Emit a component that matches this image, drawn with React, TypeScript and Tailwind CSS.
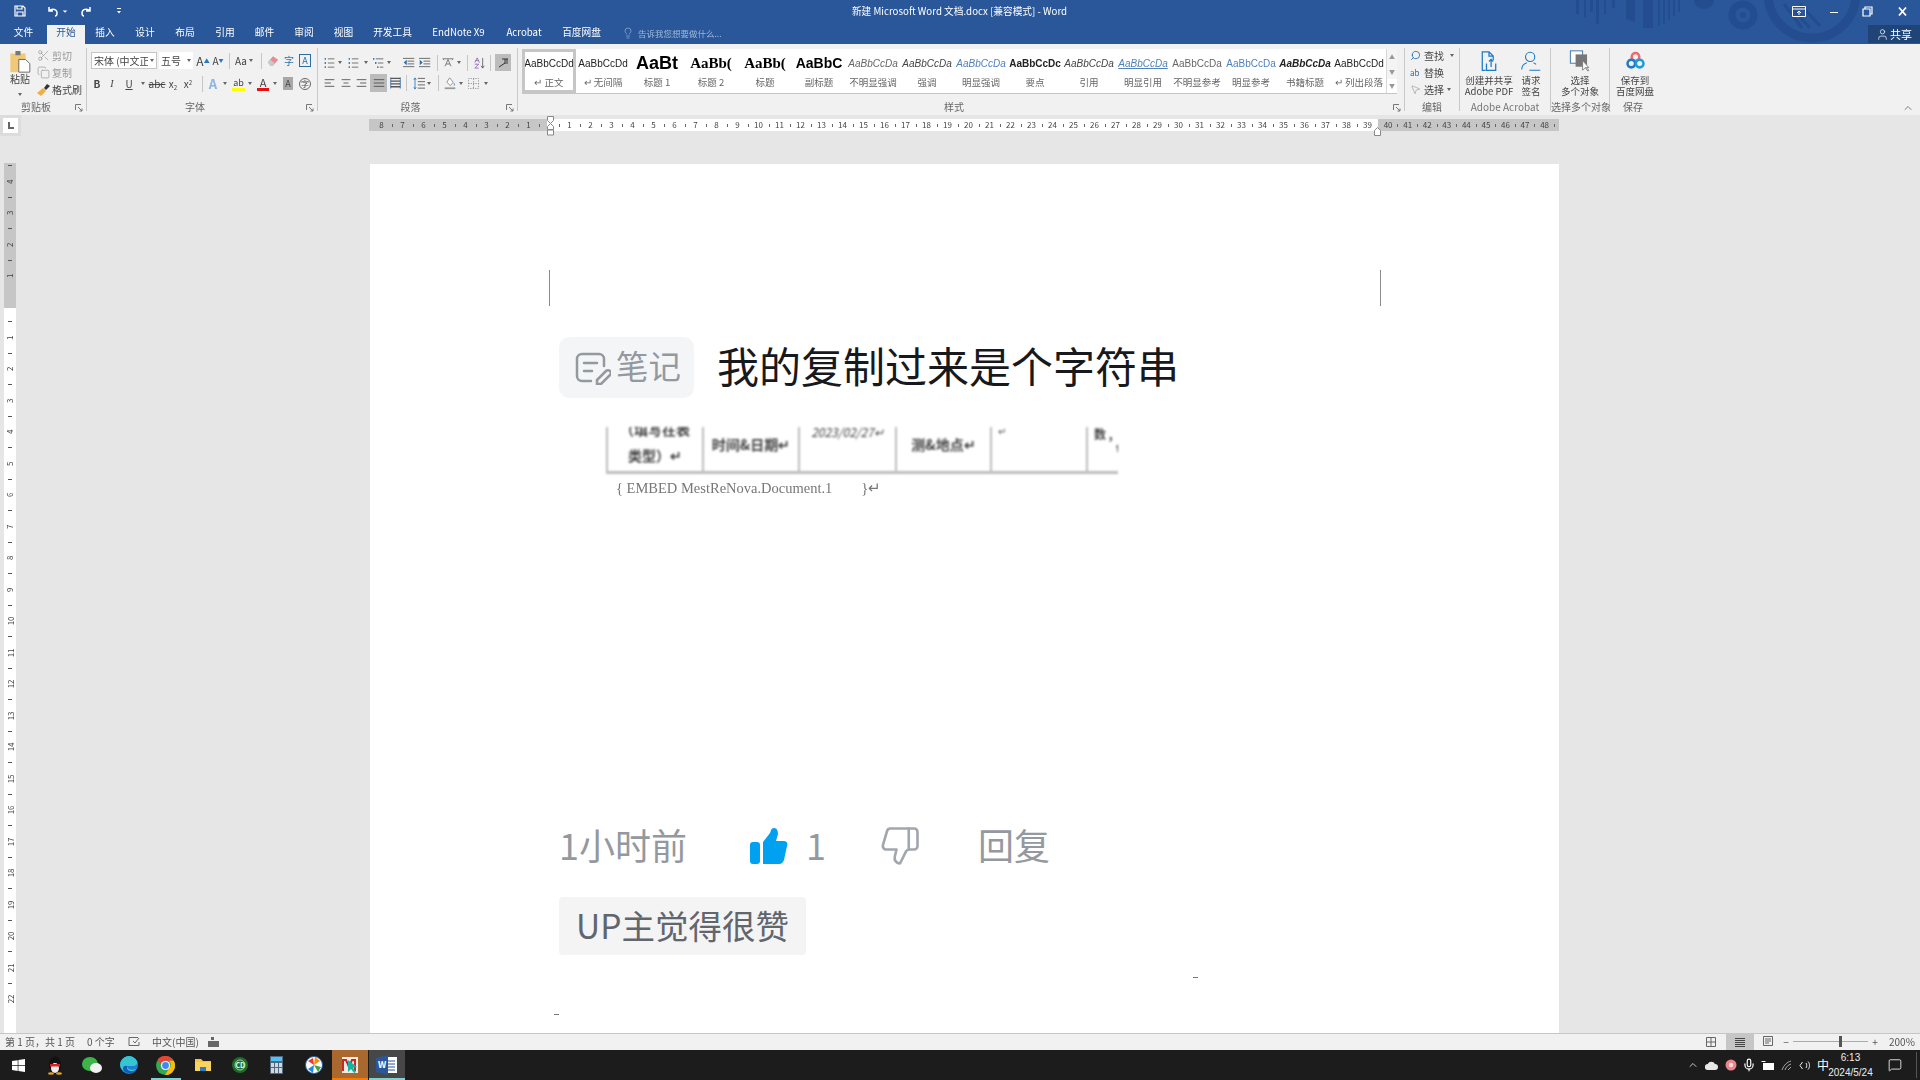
import React from "react";
import { Scissors, Copy, Search, Lightbulb, User, ThumbsDown, ChevronUp, MessageSquare, Mic, MousePointer2 } from "lucide-react";

const Caret = () => <span className="inline-block w-0 h-0 border-x-[2.5px] border-x-transparent border-t-[3px] border-t-[#666]" />;

const Launcher = () => (
  <svg width="8" height="8" viewBox="0 0 8 8" className="absolute right-[3px] bottom-[-1px]" fill="none" stroke="#777">
    <path d="M.5 6V.5H6" /><path d="M3 3l4 4M7 4.5V7H4.5" />
  </svg>
);

const Lines = ({ kind, w }: { kind: string; w: number }) => {
  const rows: Record<string, string> = {
    left: "M1 2h14M1 6h9M1 10h14",
    center: "M1 2h14M4 6h8M1 10h14",
    right: "M1 2h14M6 6h9M1 10h14",
    just: "M1 2h14M1 6h14M1 10h14",
  };
  return (
    <svg width={w} height="10" viewBox="0 0 16 12" preserveAspectRatio="none" fill="none" stroke="#555" strokeWidth="1.200">
      <path d={rows[kind]} />
    </svg>
  );
};

const Group = ({ w, label, launcher, labelCls, children }: { w: string; label: string; launcher?: boolean; labelCls?: string; children: React.ReactNode }) => (
  <div className={`relative h-[63px] shrink-0 border-r border-[#c8c8c8] ${w}`}>
    <div className="h-[51px]">{children}</div>
    <div className={`h-[16px] text-center text-[10px] leading-[16px] text-[#666] whitespace-nowrap ${labelCls ?? ""}`}>{label}</div>
    {launcher ? <Launcher /> : null}
  </div>
);

const styleItems: [string, string, string][] = [
  ["AaBbCcDd", "↵ 正文", "text-[10px] text-[#222]"],
  ["AaBbCcDd", "↵ 无间隔", "text-[10px] text-[#222]"],
  ["AaBt", "标题 1", "text-[18px] font-bold text-black"],
  ["AaBb(", "标题 2", "text-[15px] text-black [font-family:'Liberation_Serif',serif] font-bold"],
  ["AaBb(", "标题", "text-[15px] text-black [font-family:'Liberation_Serif',serif] font-bold"],
  ["AaBbC", "副标题", "text-[14px] font-bold text-black"],
  ["AaBbCcDa", "不明显强调", "text-[10px] italic text-[#666]"],
  ["AaBbCcDa", "强调", "text-[10px] italic text-[#444]"],
  ["AaBbCcDa", "明显强调", "text-[10px] italic text-[#4f81bd]"],
  ["AaBbCcDc", "要点", "text-[10px] font-bold text-[#222]"],
  ["AaBbCcDa", "引用", "text-[10px] italic text-[#444]"],
  ["AaBbCcDa", "明显引用", "text-[10px] italic text-[#4f81bd] underline decoration-[#4f81bd]"],
  ["AaBbCcDa", "不明显参考", "text-[10px] text-[#666]"],
  ["AaBbCcDa", "明显参考", "text-[10px] font-medium text-[#4f81bd]"],
  ["AaBbCcDa", "书籍标题", "text-[10px] italic font-bold text-[#222]"],
  ["AaBbCcDd", "↵ 列出段落", "text-[10px] text-[#222]"],
];

const tabs: [string, string][] = [
  ["文件", "w-[47px]"],
  ["开始", "w-[38px]"],
  ["插入", "w-[40px]"],
  ["设计", "w-[40px]"],
  ["布局", "w-[40px]"],
  ["引用", "w-[40px]"],
  ["邮件", "w-[39px]"],
  ["审阅", "w-[40px]"],
  ["视图", "w-[39px]"],
  ["开发工具", "w-[59px]"],
  ["EndNote X9", "w-[73px]"],
  ["Acrobat", "w-[58px]"],
  ["百度网盘", "w-[57px]"],
];

const Tick = () => (
  <span className="w-[10px] flex justify-center"><span className="block w-px h-[3px] bg-[#666]" /></span>
);
const Num = ({ n }: { n: number }) => <span className="w-[11px] text-center text-[8px] leading-[12px] text-[#444]">{n}</span>;

const range = (a: number, b: number) => {
  const r: number[] = [];
  if (a <= b) for (let i = a; i <= b; i++) r.push(i);
  else for (let i = a; i >= b; i--) r.push(i);
  return r;
};

const VNum = ({ n }: { n: number }) => (
  <div className="h-[31.5px] flex flex-col items-center">
    <span className="h-[15.75px] flex items-center"><span className="block h-px w-[4px] bg-[#555]" /></span>
    <span className="h-[15.75px] text-[8px] leading-[15px] text-[#444] -rotate-90">{n}</span>
  </div>
);

const TitleArt = () => (
  <svg width="300" height="44" viewBox="0 0 300 44" className="absolute left-[1560px] top-0" fill="#234d8e">
    <path d="M16 0h3v14h-3zM24 0h2v18h-2zM30 0h3v12h-3zM36 0h3v24h-3zM44 0h2v14h-2zM52 0h3v8h-3z" />
    <path d="M66 0h9v22l-9-3zM83 0h10v28H83zM98 0h2v26h-2zM103 0h2v24h-2zM108 0h2v20h-2zM113 0h2v16h-2zM118 0h2v12h-2z" />
    <path d="M134 0h20a10 9 0 0 1-20 0z" />
    <circle cx="183" cy="15" r="11" fill="none" stroke="#234d8e" strokeWidth="7" />
    <circle cx="183" cy="15" r="3" />
    <circle cx="252" cy="-6" r="44" fill="none" stroke="#234d8e" strokeWidth="9" />
    <path d="M232 8l18 20M224 4l18 24M240 4l20 22" fill="none" stroke="#234d8e" strokeWidth="3" />
  </svg>
);

const Word = () => (
  <svg width="22" height="20" viewBox="0 0 22 20">
    <rect x="7" y="2" width="14" height="16" fill="#fff" />
    <path d="M10 6h9M10 9h9M10 12h9M10 15h9" stroke="#2b579a" />
    <path d="M0 3l12-3v20L0 17z" fill="#2b579a" />
    <text x="2" y="13" fontSize="9" fontWeight="700" fill="#fff">W</text>
  </svg>
);

const Taskbar = () => (
  <div className="h-[30px] bg-[#1c1c1c] flex items-center shrink-0">
    <div className="w-[37px] flex justify-center">
      <svg width="13" height="13" viewBox="0 0 13 13" fill="#fff"><path d="M0 2l5.7-.8v5H0zM6.4 1.1L13 0v6.2H6.4zM0 6.9h5.7v5L0 11zM6.4 6.9H13V13l-6.6-1z" /></svg>
    </div>
    <div className="w-[36px] flex justify-center">
      <svg width="16" height="19" viewBox="0 0 16 19"><ellipse cx="8" cy="9" rx="6" ry="8.5" fill="#111" /><ellipse cx="8" cy="12" rx="4" ry="5" fill="#eee" /><rect x="3" y="8" width="10" height="2.5" fill="#d22" /><ellipse cx="4" cy="17.5" rx="3" ry="1.3" fill="#e8a020" /><ellipse cx="12" cy="17.5" rx="3" ry="1.3" fill="#e8a020" /></svg>
    </div>
    <div className="w-[37px] flex justify-center">
      <svg width="20" height="17" viewBox="0 0 20 17"><ellipse cx="8" cy="7" rx="8" ry="7" fill="#3eb549" /><ellipse cx="14" cy="11" rx="6" ry="5" fill="#f2f2f2" /></svg>
    </div>
    <div className="w-[37px] flex justify-center">
      <svg width="18" height="18" viewBox="0 0 18 18"><circle cx="9" cy="9" r="9" fill="#1f7fd6" /><path d="M0 9a9 9 0 0 1 17-4c1 3-1 5-4 5H7c0 3 4 5 9 3a9 9 0 0 1-16-4z" fill="#37c6d0" /><path d="M7 10c-1 4 3 7 9 4-3 4-9 4-12 1-2-2-1-6 3-5z" fill="#0d5fb5" /></svg>
    </div>
    <div className="w-[37px] h-full flex justify-center items-center relative">
      <svg width="19" height="19" viewBox="0 0 19 19">
        <circle cx="9.5" cy="9.5" r="9.5" fill="#34a853" />
        <path d="M9.5 0a9.5 9.5 0 0 1 8.2 4.7H9.5a5 5 0 0 0-4.6 3L1.6 3.6A9.5 9.5 0 0 1 9.5 0z" fill="#ea4335" />
        <path d="M17.7 4.7A9.5 9.5 0 0 1 9 19l4-6.5a5 5 0 0 0 0-7.8z" fill="#fbbc05" />
        <circle cx="9.5" cy="9.5" r="4.6" fill="#fff" /><circle cx="9.5" cy="9.5" r="3.4" fill="#4285f4" />
      </svg>
      <span className="absolute bottom-0 left-[4px] right-[3px] h-[2px] bg-[#7fd0d0]" />
    </div>
    <div className="w-[37px] flex justify-center">
      <svg width="16" height="14" viewBox="0 0 16 14"><path d="M0 1h6l2 2h8v10H0z" fill="#f6c244" /><rect x="0" y="4" width="16" height="9" fill="#fbd35f" /><rect x="5" y="9" width="6" height="4" fill="#2d7cc7" /></svg>
    </div>
    <div className="w-[37px] flex justify-center">
      <svg width="16" height="16" viewBox="0 0 16 16"><circle cx="8" cy="8" r="8" fill="#1f6b2e" /><circle cx="8" cy="8" r="5" fill="none" stroke="#a9d08e" /><text x="3.4" y="10.5" fontSize="7" fill="#dfe" fontWeight="700">CD</text></svg>
    </div>
    <div className="w-[37px] flex justify-center">
      <svg width="13" height="18" viewBox="0 0 13 18"><rect width="13" height="18" fill="#50687f" /><rect x="1" y="1" width="11" height="4" fill="#4fc3f7" /><path d="M1 7h3v4H1zM5 7h3v4H5zM9 7h3v4H9zM1 12h3v5H1zM5 12h3v5H5zM9 12h3v5H9z" fill="#cfd8dc" /></svg>
    </div>
    <div className="w-[37px] flex justify-center">
      <svg width="18" height="18" viewBox="0 0 18 18"><circle cx="9" cy="9" r="8.5" fill="#fff" stroke="#1f5f9f" /><path d="M9 9L3 5l5-3z" fill="#e53935" /><path d="M9 9l1-8 5 4z" fill="#fb8c00" /><path d="M9 9l7 2-3 5z" fill="#43a047" /><path d="M9 9l-1 8-5-4z" fill="#1e88e5" /></svg>
    </div>
    <div className="w-[36px] h-full bg-[#a9692e] flex justify-center items-center relative">
      <svg width="17" height="17" viewBox="0 0 17 17"><rect width="16" height="16" fill="#f4e8e0" /><path d="M1 14V3h3l3 7 3-7h3v11" fill="none" stroke="#c62828" strokeWidth="2" /><path d="M6 3l9 7-4 1 3 4-2 1-3-4-3 3z" fill="#12b5a5" /></svg>
      <span className="absolute bottom-0 left-0 right-0 h-[2px] bg-[#f57c00]" />
    </div>
    <div className="w-[36px] h-full ml-px bg-[#474747] flex justify-center items-center relative">
      <Word />
      <span className="absolute bottom-0 left-0 right-0 h-[2px] bg-[#7fd0d0]" />
    </div>
    <div className="flex-1" />
    <div className="flex items-center text-white h-full">
      <span className="w-[19px] flex justify-center"><ChevronUp size={12} strokeWidth={1.5} /></span>
      <span className="w-[19px] flex justify-center">
        <svg width="13" height="9" viewBox="0 0 13 9" fill="#e8e8e8"><path d="M3 9a3 3 0 0 1-.3-6A4 4 0 0 1 10 3a3 3 0 0 1 0 6z" /></svg>
      </span>
      <span className="w-[19px] flex justify-center">
        <svg width="12" height="12" viewBox="0 0 12 12"><circle cx="6" cy="6" r="5.5" fill="#e8868a" /><circle cx="6" cy="6" r="2.2" fill="#f7dbe0" /></svg>
      </span>
      <span className="w-[18px] flex justify-center"><Mic size={14} strokeWidth={2} /></span>
      <span className="w-[19px] flex justify-center">
        <svg width="13" height="11" viewBox="0 0 13 11" fill="none" stroke="#fff"><rect x="2.5" y="3.5" width="10" height="6" fill="#fff" /><path d="M.5 1.5h4" /></svg>
      </span>
      <span className="w-[19px] flex justify-center">
        <svg width="11" height="11" viewBox="0 0 11 11" fill="none" stroke="#aaa"><path d="M1 10c2-5 5-8 9-9M4 10c1-3 3-5 6-6M7 10c1-1 2-2 3-3" /></svg>
      </span>
      <span className="w-[18px] flex justify-center">
        <svg width="12" height="11" viewBox="0 0 12 11" fill="none" stroke="#eee"><path d="M3.5 2L1 5.500l2.500 3.500M7 3c1 1.500 1 3.500 0 5M9 1.500c2 2 2 6 0 8" /></svg>
      </span>
      <span className="w-[18px] text-center text-[12px]">中</span>
      <div className="w-[37px] flex flex-col items-center text-[10px] leading-[15px] text-[#eee] whitespace-nowrap [font-family:'Liberation_Sans',sans-serif]">
        <span>6:13</span>
        <span>2024/5/24</span>
      </div>
      <div className="w-[51px] h-full flex items-center justify-center relative">
        <MessageSquare size={14} strokeWidth={1.4} />
        <span className="absolute right-[3px] top-[2px] w-px h-[26px] bg-[#555]" />
      </div>
    </div>
  </div>
);

const StatusBar = () => (
  <div className="h-[17px] shrink-0 bg-[#f1f1f1] border-t border-[#c6c6c6] flex items-center text-[10px] leading-[14px] pb-px text-[#555] blur-[0.25px]">
    <span className="ml-[5px] w-[82px]">第 1 页，共 1 页</span>
    <span className="w-[41px]">0 个字</span>
    <svg width="12" height="10" viewBox="0 0 12 10" fill="none" stroke="#666"><path d="M10 .5H1v8h10V5M5 4l2 2 4-5" /></svg>
    <span className="ml-[12px] w-[56px]">中文(中国)</span>
    <svg width="11" height="10" viewBox="0 0 11 10" fill="#666"><path d="M3 0h3v3H3zM0 4h11v6H0z" /></svg>
    <div className="flex-1" />
    <svg width="10" height="10" viewBox="0 0 10 10" fill="none" stroke="#666" className="mr-[10px]"><path d="M.5.5h9v9h-9zM5 .5v9M.5 5h9" /></svg>
    <div className="w-[28px] h-[16px] bg-[#c6c6c6] flex items-center justify-center">
      <svg width="10" height="10" viewBox="0 0 10 10" stroke="#444"><path d="M0 1.500h10M0 3.500h10M0 5.500h10M0 7.500h10M0 9.500h10" /></svg>
    </div>
    <svg width="12" height="11" viewBox="0 0 12 11" fill="none" stroke="#666" className="ml-[9px] mr-[7px]"><path d="M.5.5h9v9h-9zM2 3h6M2 5h6M2 7h4" /></svg>
    <span className="w-[8px] text-center">−</span>
    <div className="relative w-[75px] h-px bg-[#aaa] mx-[3px]">
      <span className="absolute left-[46px] top-[-5px] w-[3px] h-[11px] bg-[#555]" />
    </div>
    <span className="w-[8px] text-center">+</span>
    <span className="ml-[10px] mr-[7px] w-[24px]">200%</span>
  </div>
);

const VSep = () => <span className="block w-px h-[16px] bg-[#c6c6c6] shrink-0" />;

const Ribbon = () => (
  <div className="h-[71px] shrink-0 bg-[#f1f1f1] flex pt-[4px] relative">
    <div className="flex blur-[0.35px] text-[#444]">
      <Group w="w-[87px]" label="剪贴板" labelCls="pr-[14px]" launcher>
        <div className="flex h-full">
          <div className="w-[37px] flex flex-col items-center pt-[3px] pl-[3px]">
            <svg width="21" height="22" viewBox="0 0 24 26">
              <rect x="0" y="3" width="18" height="22" fill="#f0c878" />
              <rect x="6" y="0" width="6" height="5" fill="#777" />
              <path d="M10 10h8l5 5v10H10z" fill="#fff" stroke="#555" />
            </svg>
            <span className="text-[10px] leading-[12px]">粘贴</span>
            <span className="leading-[4px] mt-[2px]"><Caret /></span>
          </div>
          <div className="flex flex-col gap-[4px] pt-[1px] text-[10px] leading-[13px]">
            <div className="flex items-center gap-[2px] text-[#999]"><Scissors size={13} strokeWidth={1.3} /><span>剪切</span></div>
            <div className="flex items-center gap-[2px] text-[#999]"><Copy size={13} strokeWidth={1.3} /><span>复制</span></div>
            <div className="flex items-center gap-[2px]">
              <svg width="13" height="12" viewBox="0 0 13 12"><path d="M0 9l6-5 3 3-5 5z" fill="#f0b040" /><path d="M7 4l3-4 3 2-4 4z" fill="#333" /></svg>
              <span className="text-[10px]">格式刷</span>
            </div>
          </div>
        </div>
      </Group>

      <Group w="w-[231px]" label="字体" labelCls="pr-[14px]" launcher>
        <div className="pl-[4px] pt-[4px] flex items-center h-[17px] box-content">
          <div className="w-[66px] h-[17px] bg-white border border-[#c6c6c6] flex items-center justify-between px-[2px] text-[10px] leading-none">
            <span className="whitespace-nowrap overflow-hidden w-[54px] h-[14px] leading-[14px]">宋体 (中文正文</span><Caret />
          </div>
          <div className="w-[34px] ml-[2px] h-[17px] bg-white flex items-center justify-between px-[2px] text-[10px] leading-none">
            <span>五号</span><Caret />
          </div>
          <span className="w-[18px] ml-px text-center text-[12px] leading-none">A<sup className="text-[#2b79c2] text-[6px]">▲</sup></span>
          <span className="w-[12px] text-center text-[10px] leading-none">A<sup className="text-[#2b79c2] text-[5px]">▼</sup></span>
          <span className="ml-[5px]"><VSep /></span>
          <span className="ml-[5px] w-[21px] flex items-center gap-[2px] text-[10px] leading-none">Aa<Caret /></span>
          <span className="ml-[5px]"><VSep /></span>
          <svg width="12" height="12" viewBox="0 0 14 13" className="ml-[5px]"><path d="M1 8l6-7 6 4-6 7H4z" fill="#e88a92" /><path d="M1 8l3-3 5 4-2 3H4z" fill="#c9c9c9" /></svg>
          <span className="w-[10px] ml-[5px] text-center text-[10px] leading-[10px] text-[#2f6fa8]">字</span>
          <span className="w-[12px] h-[13px] ml-[5px] border border-[#2b6ca3] text-[#2b6ca3] text-[9px] leading-[11px] text-center">A</span>
        </div>
        <div className="pl-[3px] mt-[6px] flex items-center h-[17px] text-[10px]">
          <span className="w-[14px] font-bold text-center">B</span>
          <span className="w-[16px] italic text-center [font-family:'Liberation_Serif',serif]">I</span>
          <span className="w-[18px] underline text-center">U</span>
          <span className="w-[10px] flex justify-center"><Caret /></span>
          <span className="w-[18px] text-center line-through">abc</span>
          <span className="w-[14px] text-center">x<sub className="text-[6px]">2</sub></span>
          <span className="w-[16px] text-center">x<sup className="text-[6px]">2</sup></span>
          <span className="ml-[6px]"><VSep /></span>
          <span className="w-[14px] ml-[3px] text-[13px] leading-none font-bold text-center text-[#8db4e2]">A</span>
          <span className="w-[10px] flex justify-center"><Caret /></span>
          <span className="w-[13px] ml-[2px] text-[9px] text-center leading-[11px] border-b-[3px] border-[#ffff00]">ab</span>
          <span className="w-[10px] flex justify-center"><Caret /></span>
          <span className="w-[12px] ml-[2px] text-[11px] leading-[11px] text-center border-b-[3px] border-[#e81010]">A</span>
          <span className="w-[12px] flex justify-center"><Caret /></span>
          <span className="w-[10px] h-[13px] ml-[2px] bg-[#a8a8a8] text-[9px] leading-[13px] text-center">A</span>
          <span className="ml-[6px] w-[12px] h-[12px] rounded-full border border-[#666] text-[8px] leading-[10px] text-center">字</span>
        </div>
      </Group>

      <Group w="w-[200px]" label="段落" labelCls="pr-[14px]" launcher>
        <div className="pl-[6px] pt-[4px] flex items-center h-[21px] box-content">
          <svg width="11" height="12" viewBox="0 0 17 13" preserveAspectRatio="none" fill="none"><path d="M6 2h10M6 6.500h10M6 11h10" stroke="#555" /><path d="M1 1h2v2H1zM1 5.500h2v2H1zM1 10h2v2H1z" fill="#2b79c2" /></svg>
          <span className="ml-[3px] flex"><Caret /></span>
          <svg width="11" height="12" viewBox="0 0 17 13" preserveAspectRatio="none" fill="none" className="ml-[6px]"><path d="M6 2h10M6 6.500h10M6 11h10" stroke="#555" /><path d="M1 1h2v2H1zM1 5.500h2v2H1zM1 10h2v2H1z" fill="#2b79c2" /></svg>
          <span className="ml-[5px] flex"><Caret /></span>
          <svg width="11" height="12" viewBox="0 0 16 13" preserveAspectRatio="none" fill="none" className="ml-[5px]"><path d="M4 2h11M7 6.500h8M10 11h5" stroke="#555" /><path d="M0 1h2v2H0zM3 5.500h2v2H3zM6 10h2v2H6z" fill="#2b79c2" /></svg>
          <span className="ml-[3px] flex"><Caret /></span>
          <svg width="12" height="11" viewBox="0 0 16 12" preserveAspectRatio="none" fill="none" className="ml-[12px]"><path d="M0 1.500h15M6 4.500h9M6 7.500h9M0 10.500h15" stroke="#555" /><path d="M5 3v6L1 6z" fill="#2b6ca3" /></svg>
          <svg width="12" height="11" viewBox="0 0 16 12" preserveAspectRatio="none" fill="none" className="ml-[4px]"><path d="M0 1.500h15M6 4.500h9M6 7.500h9M0 10.500h15" stroke="#555" /><path d="M1 3v6l4-3z" fill="#2b6ca3" /></svg>
          <span className="ml-[6px]"><VSep /></span>
          <svg width="12" height="13" viewBox="0 0 16 14" fill="none" stroke="#555" className="ml-[4px]"><path d="M1 2h14M4 12L8 3l4 9M5.500 9h5" /><path d="M1 2l2 2M15 2l-2 2" stroke="#2b79c2" /></svg>
          <span className="ml-[3px] flex"><Caret /></span>
          <span className="ml-[6px]"><VSep /></span>
          <svg width="11" height="14" viewBox="0 0 14 15" fill="none" className="ml-[6px]"><path d="M1 7L4 1l3 6M2 4.500h4" stroke="#8a5cb0" /><path d="M1 9h5L1 14h5" stroke="#8a5cb0" /><path d="M11 1v13M9 11l2 3 2-3" stroke="#555" /></svg>
          <span className="ml-[5px]"><VSep /></span>
          <span className="ml-[4px] w-[16px] h-[17px] bg-[#bcbcbc] flex items-center justify-center">
            <svg width="11" height="11" viewBox="0 0 11 11" fill="none" stroke="#333"><path d="M1 10l6-4M4 2h6M7 2v5M9 2v5" /></svg>
          </span>
        </div>
        <div className="pl-[6px] mt-[1px] flex items-center h-[18px] text-[#555]">
          <Lines kind="left" w={11} />
          <span className="ml-[6px] flex"><Lines kind="center" w={10} /></span>
          <span className="ml-[5px] flex"><Lines kind="right" w={11} /></span>
          <span className="ml-[3px] w-[17px] h-[18px] bg-[#bcbcbc] flex items-center justify-center"><Lines kind="just" w={12} /></span>
          <svg width="11" height="12" viewBox="0 0 15 13" preserveAspectRatio="none" fill="none" stroke="#555" className="ml-[3px]"><path d="M1 .5v12M14 .5v12" stroke="#2b6ca3" /><path d="M1 1.500h13M1 4.500h13M1 7.500h13M1 10.500h13" strokeWidth="1.500" /></svg>
          <span className="ml-[5px]"><VSep /></span>
          <svg width="12" height="13" viewBox="0 0 15 14" preserveAspectRatio="none" fill="none" className="ml-[6px]"><path d="M6 1.500h9M6 5h9M6 8.500h9M6 12h9" stroke="#555" /><path d="M2.500 1v12M1 3l1.500-2L4 3M1 11l1.500 2L4 11" stroke="#2b79c2" /></svg>
          <span className="ml-[2px] flex"><Caret /></span>
          <span className="ml-[7px]"><VSep /></span>
          <svg width="12" height="13" viewBox="0 0 17 15" preserveAspectRatio="none" fill="none" stroke="#777" className="ml-[5px]"><path d="M8 1l5 5-4 4-5-4z" fill="#fff" /><path d="M1 13h15" strokeWidth="2" stroke="#999" /><path d="M14 7c1 1 1 3 0 3" stroke="#2b79c2" /></svg>
          <span className="ml-[3px] flex"><Caret /></span>
          <svg width="11" height="11" viewBox="0 0 14 12" preserveAspectRatio="none" fill="none" stroke="#888" strokeDasharray="1.5 1.5" className="ml-[5px]"><path d="M.5.500h13v11H.5zM.5 6h13M7 .5v11" /></svg>
          <span className="ml-[5px] flex"><Caret /></span>
        </div>
      </Group>

      <div className="relative w-[887px] h-[63px] shrink-0 border-r border-[#c8c8c8]">
        <div className="ml-[4px] mt-px w-[875px] h-[45px] bg-white border-b border-[#c6c6c6] flex">
          {styleItems.map(([sample, label, cls], i) => (
            <div key={i} className={`w-[54px] shrink-0 h-[44px] flex flex-col items-center overflow-hidden ${i === 0 ? "border-[3px] border-[#c6c6c6] bg-white" : "pt-[3px]"}`}>
              <span className={`h-[23px] leading-[23px] whitespace-nowrap [font-family:'Liberation_Sans',sans-serif] ${cls}`}>{sample}</span>
              <span className="text-[9.500px] leading-[14px] whitespace-nowrap text-[#666]">{label}</span>
            </div>
          ))}
          <div className="w-[11px] shrink-0 h-[44px] border-l border-[#d8d8d8] flex flex-col text-[#999] text-[6px] text-center bg-[#f4f4f4]">
            <span className="h-[15px] leading-[15px]">▲</span>
            <span className="h-[15px] leading-[15px]">▼</span>
            <span className="h-[14px] leading-[14px] bg-white">▼</span>
          </div>
        </div>
        <div className="mt-[5px] pr-[14px] text-center text-[10px] leading-[16px] text-[#666]">样式</div>
        <Launcher />
      </div>

      <Group w="w-[55px]" label="编辑">
        <div className="pl-[5px] pt-[1px] flex flex-col gap-[4px] text-[10px] leading-[13px]">
          <div className="flex items-center gap-[3px]"><Search size={11} strokeWidth={1.8} className="text-[#2b6ca3] -scale-x-100" /><span>查找</span><span className="ml-[3px] flex"><Caret /></span></div>
          <div className="flex items-center gap-[3px]"><span className="text-[8px] leading-[9px] text-[#2b6ca3] w-[11px]">ab</span><span>替换</span></div>
          <div className="flex items-center gap-[3px]"><MousePointer2 size={11} strokeWidth={1} className="text-[#777]" /><span>选择</span><Caret /></div>
        </div>
      </Group>

      <Group w="w-[91px]" label="Adobe Acrobat" labelCls="text-[#777]">
        <div className="flex h-full pt-[3px] text-[9.500px] leading-[11px] text-center">
          <div className="w-[58px] flex flex-col items-center">
            <svg width="18" height="21" viewBox="0 0 20 25" fill="none" stroke="#1d79c9" strokeWidth="1.500" className="mb-[3px]"><path d="M6 23H2V1h8l5 5v5M10 1v5h5" /><path d="M7 15v8h11v-8M12.500 19v-9M10 12.500l2.500-2.500 2.500 2.500" /></svg>
            <span className="whitespace-nowrap">创建并共享</span>
            <span className="whitespace-nowrap">Adobe PDF</span>
          </div>
          <div className="w-[26px] flex flex-col items-center">
            <svg width="22" height="21" viewBox="0 0 24 25" fill="none" stroke="#1d79c9" strokeWidth="1.300" className="mb-[3px]"><circle cx="11" cy="7" r="5.500" /><path d="M1 22c0-5 3-7 6-8M15 14c1 .3 2 1 3 2M10 23h13" /></svg>
            <span>请求</span>
            <span>签名</span>
          </div>
        </div>
      </Group>

      <Group w="w-[59px]" label="选择多个对象" labelCls="text-[9px]">
        <div className="flex flex-col items-center pt-[2px] text-[9.500px] leading-[11px]">
          <svg width="22" height="22" viewBox="0 0 24 25" className="mb-[3px]"><rect x="1" y="1" width="14" height="14" fill="#fff" stroke="#2b6ca3" /><rect x="7" y="5" width="13" height="14" fill="#777" /><path d="M15 12v11l3-3 3 4 1-1-3-3h3z" fill="#fff" stroke="#777" /></svg>
          <span>选择</span>
          <span>多个对象</span>
        </div>
      </Group>

      <div className="relative w-[50px] h-[63px] shrink-0">
        <div className="h-[51px] flex flex-col items-center pt-[3px] text-[9.500px] leading-[11px]">
          <svg width="21" height="21" viewBox="0 0 22 25" fill="none" strokeWidth="3" className="mb-[3px]"><circle cx="11" cy="7" r="4.500" stroke="#ef6a6a" /><circle cx="6" cy="15" r="4.500" stroke="#1d79c9" /><circle cx="16" cy="15" r="4.500" stroke="#1d9bd9" /></svg>
          <span className="whitespace-nowrap">保存到</span>
          <span className="whitespace-nowrap">百度网盘</span>
        </div>
        <div className="h-[16px] pr-[4px] text-center text-[10px] leading-[16px] text-[#666]">保存</div>
      </div>
    </div>
    <ChevronUp size={12} strokeWidth={1.5} className="absolute right-[6px] bottom-[1px] text-[#555]" />
  </div>
);

const HRuler = () => (
  <div className="flex -ml-px w-[1190px] h-[12px] mt-[4px] overflow-hidden relative blur-[0.2px]">
    <div className="w-[178px] shrink-0 bg-[#c6c6c6] flex justify-end items-center pr-[3px]">
      {range(8, 1).map((n) => (
        <React.Fragment key={n}><Num n={n} /><Tick /></React.Fragment>
      ))}
    </div>
    <div className="w-[831px] shrink-0 bg-white flex items-center pl-[7px] overflow-hidden">
      {range(1, 39).map((n) => (
        <React.Fragment key={n}><Tick /><Num n={n} /></React.Fragment>
      ))}
    </div>
    <div className="w-[181px] shrink-0 bg-[#c6c6c6] flex items-center pl-[5px]">
      {range(40, 48).map((n) => (
        <React.Fragment key={n}><Num n={n} /><Tick /></React.Fragment>
      ))}
    </div>
  </div>
);

const Page = () => (
  <div className="relative w-[1189px] flex-1 mt-[33px] bg-white overflow-hidden">
    <div className="mt-[106px] ml-[179px] w-[832px] h-[36px] flex justify-between">
      <span className="w-px h-full bg-[#8c8c8c]" />
      <span className="w-px h-full bg-[#8c8c8c]" />
    </div>

    <div className="ml-[189px] mt-[31px]">
      <div className="flex items-center h-[61px]">
        <div className="w-[135px] h-[61px] rounded-[10px] bg-[#f4f5f7] flex items-center pl-[16px] text-[#9499a0]">
          <svg width="36" height="34" viewBox="0 0 36 34" fill="none" stroke="#9499a0" strokeWidth="2.500" strokeLinecap="round" className="shrink-0">
            <path d="M16 30H7a5 5 0 0 1-5-5V8a5 5 0 0 1 5-5h17a5 5 0 0 1 5 5v7" />
            <path d="M9 12h13M9 20h8" />
            <path d="M22 29l9-9a2.800 2.800 0 0 1 4 4l-9 9h-4z" />
          </svg>
          <span className="ml-[5px] text-[32.500px] leading-none whitespace-nowrap -translate-y-[2px]">笔记</span>
        </div>
        <span className="ml-[23px] text-[42px] leading-none text-[#18191c] whitespace-nowrap -translate-y-[3px]">我的复制过来是个字符串</span>
      </div>

      <div className="mt-[29px] ml-[47px] w-[512px] h-[47px] flex border-b-[3px] border-[#bdbdbd] overflow-hidden blur-[0.9px] text-[#444] font-bold text-[14px]">
        <div className="w-[96px] border-l-2 border-[#bdbdbd] flex flex-col items-center text-[14px] leading-[26px] -mt-[11px] whitespace-nowrap">
          <span>（填写在表</span><span>类型）↵</span>
        </div>
        <div className="w-[96px] border-l-2 border-[#bdbdbd] flex items-center justify-center pb-[10px] whitespace-nowrap">时间&日期↵</div>
        <div className="w-[97px] border-l-2 border-[#bdbdbd] flex justify-center text-[12px] font-normal italic leading-[10px] whitespace-nowrap">2023/02/27↵</div>
        <div className="w-[95px] border-l-2 border-[#bdbdbd] flex items-center justify-center pb-[10px] whitespace-nowrap">测&地点↵</div>
        <div className="w-[96px] border-l-2 border-[#bdbdbd] pl-[6px] text-[10px] leading-[8px] font-normal">↵</div>
        <div className="w-[32px] border-l-2 border-[#bdbdbd] pl-[6px] text-[12px] leading-[14px] whitespace-nowrap">数 ,<br /><span className="pl-[22px]">t</span></div>
      </div>
      <div className="ml-[57px] mt-[6px] h-[17px] text-[14.500px] leading-[17px] text-[#777] blur-[0.7px] whitespace-pre [font-family:'Liberation_Serif',serif]">
        {"{ EMBED MestReNova.Document.1        }↵"}
      </div>

      <div className="mt-[329px] flex items-center h-[40px] text-[36px] leading-none text-[#9499a0]">
        <span className="w-[191px] -translate-y-[2px]">1小时前</span>
        <svg width="38" height="36" viewBox="0 0 38 36" fill="#00a1f1" className="shrink-0">
          <rect x="0" y="14" width="10" height="22" rx="3" />
          <path d="M13 14L20 5c1-2 1-5 4-5 3 0 4 3 4 6l-2 7h8c3 0 4 3 3 5l-3 14c-1 2-2 4-5 4H13z" />
        </svg>
        <span className="w-[95px] pl-[18px] -translate-y-[2px]">1</span>
        <div className="w-[95px]"><ThumbsDown size={42} strokeWidth={1.500} className="text-[#a2a7ae] -ml-[4px]" /></div>
        <span className="-translate-y-[2px]">回复</span>
      </div>

      <div className="mt-[31px] w-[247px] h-[58px] rounded-[4px] bg-[#f4f4f4] flex items-center justify-center text-[33.500px] leading-none text-[#61666d] whitespace-nowrap">
        <span className="-translate-y-px">UP主觉得很赞</span>
      </div>
    </div>

    <span className="absolute left-[823px] top-[813px] w-[5px] h-px bg-[#777]" />
    <span className="absolute left-[184px] top-[850px] w-[5px] h-px bg-[#777]" />
  </div>
);

export default function App() {
  return (
    <div className="w-[1920px] h-[1080px] overflow-hidden flex flex-col [font-family:'Noto_Sans_CJK_SC','Noto_Sans',sans-serif]">
      <div className="relative h-[44px] shrink-0 bg-[#2a579a] text-white overflow-hidden">
        <TitleArt />
        <div className="relative h-[22px] flex items-center blur-[0.2px]">
          <svg width="12" height="12" viewBox="0 0 12 12" fill="none" stroke="#fff" strokeWidth="1.200" className="ml-[14px]"><path d="M1 1h8l2 2v8H1zM3 1v3h5V1M3 11V7h6v4" /></svg>
          <svg width="13" height="11" viewBox="0 0 13 11" fill="none" stroke="#fff" strokeWidth="1.500" className="ml-[20px]"><path d="M3 1v4h4M3 5c3-3 8-2 8 2 0 2-1 3-2 3" /></svg>
          <span className="ml-[3px] flex scale-75"><span className="inline-block w-0 h-0 border-x-[3px] border-x-transparent border-t-[3px] border-t-white" /></span>
          <svg width="13" height="11" viewBox="0 0 13 11" fill="none" stroke="#fff" strokeWidth="1.500" className="ml-[12px]"><path d="M10 1v4H6M10 5C7 2 2 3 2 7c0 2 1 3 2 3" /></svg>
          <svg width="6" height="6" viewBox="0 0 6 6" fill="#fff" className="ml-[23px]"><path d="M1 0h4v1H1zM1 3h4L3 5.500z" /></svg>
          <span className="absolute left-[-1px] right-0 text-center text-[9.700px] leading-[22px]">新建 Microsoft Word 文档.docx [兼容模式] - Word</span>
          <div className="absolute right-[1px] top-0 h-[22px] flex items-center">
            <span className="w-[34px] flex justify-center"><svg width="14" height="11" viewBox="0 0 14 11" fill="none" stroke="#fff"><path d="M.5.500h13v10H.5zM.5 3h13M7 9V5M5 7l2-2 2 2" /></svg></span>
            <span className="w-[35px] flex justify-center"><svg width="14" height="10" viewBox="0 0 14 10" stroke="#fff"><path d="M3 6.500h8" /></svg></span>
            <span className="w-[34px] flex justify-center"><svg width="12" height="11" viewBox="0 0 12 11" fill="none" stroke="#fff" strokeWidth="1.200"><path d="M3 3V1h7v7H8M1 3h7v7H1z" /></svg></span>
            <span className="w-[34px] flex justify-center"><svg width="11" height="11" viewBox="0 0 11 11" stroke="#fff" strokeWidth="1.800"><path d="M2 1.500l7 8M9 1.500l-7 8" /></svg></span>
          </div>
        </div>
        <div className="relative h-[22px] flex text-[9.700px] items-end blur-[0.2px]">
          {tabs.map(([t, w], i) => (
            <div key={t} className={`${w} h-[19px] leading-[15px] text-center whitespace-nowrap ${i === 1 ? "bg-[#f1f1f1] text-[#2a579a]" : "text-white"}`}>{t}</div>
          ))}
          <div className="h-[19px] flex items-center ml-[12px] pb-[3px] text-[#9fb8d8] text-[8.500px] whitespace-nowrap">
            <Lightbulb size={12} strokeWidth={1.300} className="mr-[4px]" />
            <span>告诉我您想要做什么...</span>
          </div>
          <div className="absolute right-0 bottom-px w-[52px] h-[18px] bg-[#1e4478] flex items-center justify-center gap-[1px] text-[11px]">
            <User size={13} strokeWidth={1.300} /><span>共享</span>
          </div>
        </div>
      </div>

      <Ribbon />

      <div className="flex-1 min-h-0 flex bg-[#e6e6e6]">
        <div className="w-[21px] shrink-0 flex flex-col">
          <div className="w-[21px] h-[21px] bg-[#dcdcdc] p-[3px]">
            <div className="w-[15px] h-[15px] bg-white flex items-center justify-center">
              <span className="block w-[6px] h-[7px] border-l-2 border-b-2 border-[#666]" />
            </div>
          </div>
          <div className="mt-[27px] ml-[4px] w-[12px] flex-1 overflow-hidden bg-white blur-[0.2px]">
            <div className="h-[145px] bg-[#c6c6c6] overflow-hidden">
              <div className="-mt-[5px] flex flex-col items-center">
                {[4, 3, 2, 1].map((n) => <VNum key={n} n={n} />)}
              </div>
            </div>
            <div className="flex flex-col items-center pt-[6px]">
              {range(1, 22).map((n) => <VNum key={n} n={n} />)}
            </div>
          </div>
        </div>
        <div className="flex-1 flex flex-col pl-[349px] relative">
          <HRuler />
          <Page />
          <svg width="8" height="21" viewBox="0 0 8 21" className="absolute left-[526px] top-[1px]" fill="#fff" stroke="#888"><path d="M.5.500h6v4l-3 3-3-3zM3.500 7.500l3 3v3h-6v-3zM.5 14h6v5h-6z" /></svg>
          <svg width="8" height="10" viewBox="0 0 8 10" className="absolute left-[1353px] top-[12px]" fill="#fff" stroke="#888"><path d="M3.500.5l3 3v5h-6v-5z" /></svg>
        </div>
      </div>

      <StatusBar />
      <Taskbar />
    </div>
  );
}
